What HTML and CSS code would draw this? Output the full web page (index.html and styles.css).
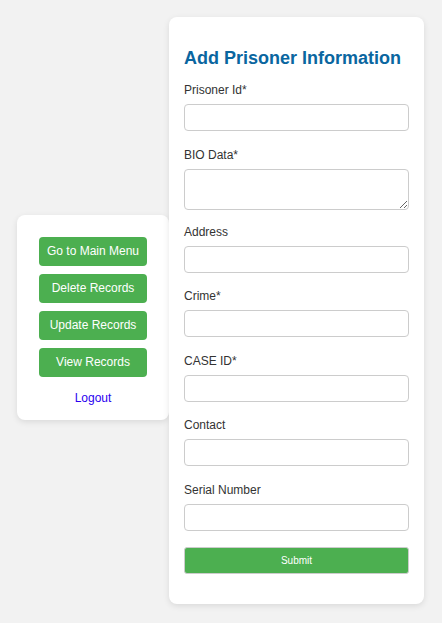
FILE: index.html
```html
<!DOCTYPE html>
<html>
<head>
<meta charset="utf-8">
<link rel="stylesheet" href="styles.css">
</head>
<body>
  <div class="menu-card">
    <button class="menu-btn">Go to Main Menu</button>
    <button class="menu-btn">Delete Records</button>
    <button class="menu-btn">Update Records</button>
    <button class="menu-btn">View Records</button>
    <a class="logout" href="#">Logout</a>
  </div>
  <div class="form-card">
    <h2 class="title">Add Prisoner Information</h2>
    <form class="form">
      <label class="label">Prisoner Id*</label>
      <input class="field" type="text">
      <label class="label">BIO Data*</label>
      <textarea class="field area"></textarea>
      <label class="label">Address</label>
      <input class="field" type="text">
      <label class="label">Crime*</label>
      <input class="field" type="text">
      <label class="label">CASE ID*</label>
      <input class="field" type="text">
      <label class="label">Contact</label>
      <input class="field" type="text">
      <label class="label">Serial Number</label>
      <input class="field" type="text">
      <button class="submit" type="button">Submit</button>
    </form>
  </div>
</body>
</html>
```

FILE: styles.css
```css
html, body {
  margin: 0;
  padding: 0;
}
body {
  background: #f2f2f2;
  font-family: "Liberation Sans", Arial, sans-serif;
  min-height: 100vh;
  box-sizing: border-box;
  padding: 0 1px 2px 0;
  display: flex;
  align-items: center;
  justify-content: center;
}
.menu-card {
  width: 152px;
  box-sizing: border-box;
  background: #fff;
  border-radius: 8px;
  box-shadow: 0 2px 6px rgba(0, 0, 0, 0.1);
  padding: 22px 22px 15px;
  margin-top: 13px;
  display: flex;
  flex-direction: column;
  gap: 8px;
  align-items: stretch;
}
.menu-btn {
  background: #4caf50;
  color: #fff;
  border: none;
  border-radius: 4px;
  font-family: "Liberation Sans", Arial, sans-serif;
  font-size: 12px;
  line-height: 15px;
  padding: 7px 0;
  cursor: pointer;
}
.logout {
  margin-top: 6px;
  text-align: center;
  color: #2a00f0;
  text-decoration: none;
  font-size: 12px;
  line-height: 14px;
}
.form-card {
  width: 255px;
  box-sizing: border-box;
  background: #fff;
  border-radius: 8px;
  box-shadow: 0 2px 6px rgba(0, 0, 0, 0.1);
  padding: 15px;
}
.title {
  margin: 16px 0 14px;
  color: #0a66a0;
  font-size: 18px;
  line-height: 21px;
  font-weight: bold;
}
.form {
  display: flex;
  flex-direction: column;
}
.label {
  color: #333;
  font-size: 12px;
  line-height: 15px;
  margin-bottom: 6px;
}
.field {
  box-sizing: border-box;
  width: 100%;
  height: 27px;
  border: 1px solid #ccc;
  border-radius: 4px;
  margin: 0 0 16.5px;
  padding: 5px;
  font-family: "Liberation Sans", Arial, sans-serif;
  font-size: 13px;
}
.area {
  height: 41px;
  margin-bottom: 15px;
}
.submit {
  box-sizing: border-box;
  height: 27px;
  margin: 0 0 15px;
  background: #4caf50;
  color: #fff;
  border: 1px solid #ccc;
  border-radius: 3px;
  font-family: "Liberation Sans", Arial, sans-serif;
  font-size: 10px;
  cursor: pointer;
}
```
